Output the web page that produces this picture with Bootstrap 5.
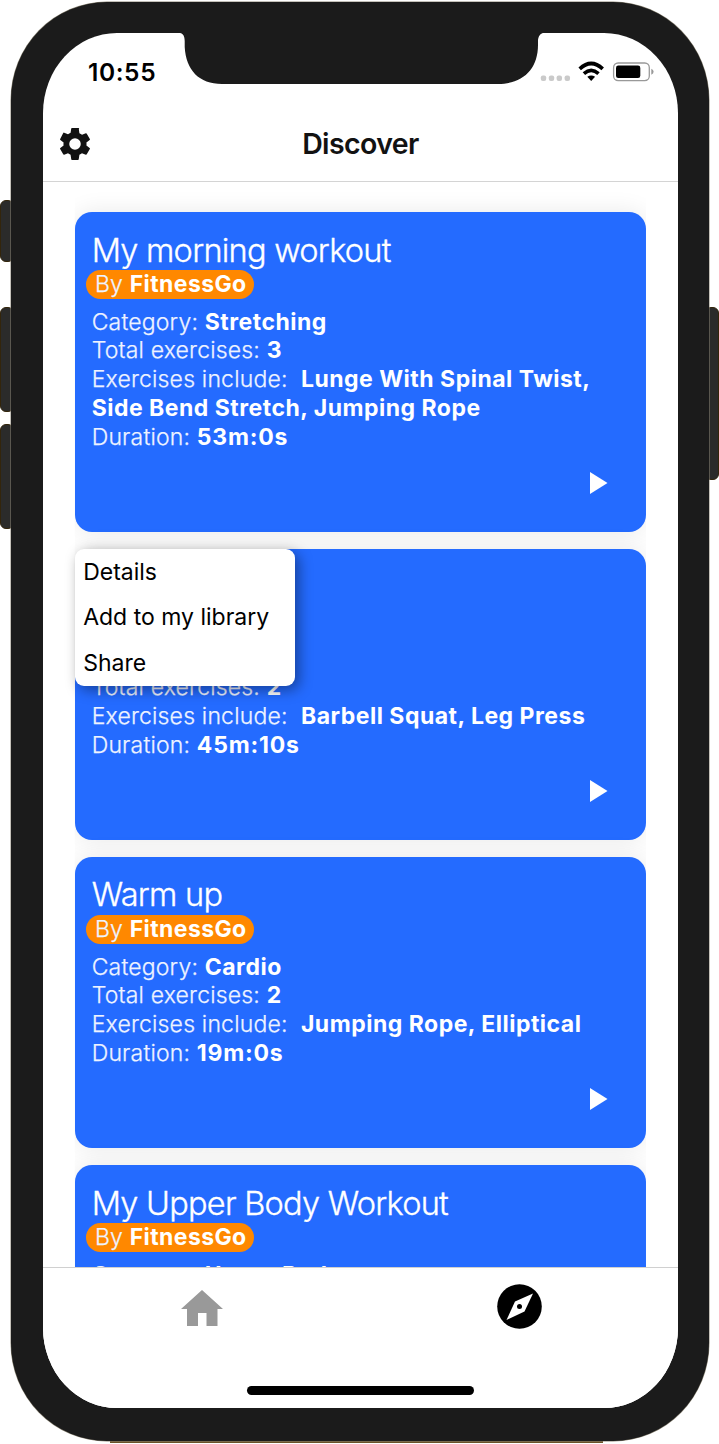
<!DOCTYPE html>
<html lang="en">
<head>
<meta charset="utf-8">
<meta name="viewport" content="width=device-width, initial-scale=1">
<title>Discover</title>
<link rel="stylesheet" href="https://cdn.jsdelivr.net/npm/bootstrap@5.3.0/dist/css/bootstrap.min.css">
<style>
html,body{height:1444px;overflow:hidden}
body{width:719px;background:#fff;font-family:Inter,sans-serif;color:#000}
.device{width:719px;height:1444px}
.frame{margin:1.5px 10px 0 10.7px;width:698.3px;height:1439.5px;padding:31.5px 31px 33px 32.3px;background:#1b1b1b;border-radius:96px/98px;box-shadow:0 0 0 .5px #8a8474}
.screen{height:1375px;border-radius:74px/80px;background:#fff;overflow:hidden}
.side-key{background:#2b2b2a;border:1px solid #33250b;width:14px}
.foot-edge{left:110px;top:1440px;width:493px;height:3px;background:#6b5228}
.notch{left:137px;top:0;width:363px;height:51px}
.status{height:77px;padding:0 24px 0 45px}
.clock{font-size:24.5px;font-weight:600;letter-spacing:.6px;line-height:79px}
.title-row{height:72px;border-bottom:1px solid #d4d4d4}
.title-row h1{font-size:28.5px;font-weight:600;letter-spacing:-.6px;color:#121212;line-height:68px}
.gear{left:16px;top:18px}
.feed{height:1085px}
.feed-list{padding:30px 0 0;margin:0 32px 0 31.7px;gap:17px;height:1085px;clip-path:inset(0)}
.workout{flex:none;border:0;border-radius:17px;background:#246bff;color:#fff;height:291.2px;padding:18.5px 17.3px 0 17px;box-shadow:0 0 24px rgba(0,0,0,.09)}
.workout.tall{height:319.8px}
.workout h2{font-size:32.5px;font-weight:300;-webkit-text-stroke:.35px #fff;line-height:40.5px;letter-spacing:-.75px;margin:0 0 -1px;white-space:nowrap}
.author{background:#ff8800;border-radius:15px;height:28.7px;line-height:29px;margin:0 0 8.9px -5.3px;width:168px;padding-left:8.6px;align-self:flex-start;font-size:23px;white-space:nowrap}
.facts{font-size:23px;line-height:28.75px;white-space:nowrap}
.facts,.author{font-weight:300;-webkit-text-stroke:.25px #eef3ff;letter-spacing:.18px;color:#eef3ff}
.facts b,.author b{font-weight:700;-webkit-text-stroke:0;letter-spacing:.5px;color:#fff}
.author b{letter-spacing:.4px}
.facts .nums{letter-spacing:.8px}
.play{left:515.5px;bottom:38px}
.options{left:31.7px;width:220px;height:137.5px;border-radius:9px;background:#fff;box-shadow:4px 4px 14px rgba(0,0,0,.4);font-size:23px;z-index:2}
.options li{height:45.8px;line-height:46.8px;padding-left:8.500px;white-space:nowrap}
.tabs{height:141px;border-top:1px solid #d0d0d0;background:#fff;z-index:3}
.home-bar{left:204px;bottom:13.5px;width:227px;height:8.5px;border-radius:5px;background:#000}
</style>
</head>
<body>
<div class="device position-relative overflow-hidden">
  <i class="side-key position-absolute rounded-2" style="left:0;top:200px;height:62px"></i>
  <i class="side-key position-absolute rounded-2" style="left:0;top:307px;height:105px"></i>
  <i class="side-key position-absolute rounded-2" style="left:0;top:424px;height:105px"></i>
  <i class="side-key position-absolute rounded-2" style="left:705px;top:307px;height:173px"></i>
  <i class="foot-edge position-absolute"></i>
  <div class="frame position-relative d-inline-block">
    <main class="screen position-relative d-flex flex-column">
      <svg class="notch position-absolute" viewBox="0 0 363 51"><path fill="#1b1b1b" d="M0 0C3 .5 4.700 3 4.700 8V14C6 37 19 51 42 51H318C343 51 358 36 358 12V8C358 3 361 .3 363 0Z"/></svg>
      <div class="status d-flex flex-shrink-0 justify-content-between">
        <span class="clock">10:55</span>
        <svg width="114" height="77" viewBox="0 0 114 77">
          <g fill="#cacaca"><rect x=".8" y="42.500" width="5.400" height="5.400" rx="2"/><rect x="8.800" y="42.500" width="5.400" height="5.400" rx="2"/><rect x="16.600" y="42.500" width="5.400" height="5.400" rx="2"/><rect x="24.600" y="42.500" width="5.400" height="5.400" rx="2"/></g>
          <g fill="none" stroke="#000" stroke-width="3.700"><path d="M39.700 35.800Q51.200 25.200 62.700 35.800"/><path d="M43.900 40.600Q51.200 34.200 58.500 40.600"/></g>
          <path d="M51.200 48l-3.900-4.200q3.900-2.800 7.800 0z"/>
          <rect x="73.600" y="30" width="35.700" height="17.600" rx="4.500" fill="#fff" stroke="#999" stroke-width="1.300"/><rect x="76" y="32.600" width="24.300" height="12.400" rx="2.300"/><path d="M111.300 35.700q2.300 1 2.300 3t-2.300 3z" fill="#999"/>
        </svg>
      </div>
      <header class="title-row position-relative flex-shrink-0 text-center">
        <svg class="gear position-absolute" width="32" height="32" viewBox="2.250 2 19.500 20"><path fill="#111" d="M19.140 12.940c.04-.3.060-.61.060-.94 0-.32-.02-.64-.07-.94l2.030-1.580a.49.49 0 0 0 .12-.61l-1.920-3.320a.49.49 0 0 0-.59-.22l-2.390.96a7 7 0 0 0-1.620-.94l-.36-2.540A.48.48 0 0 0 13.920 2h-3.840a.48.48 0 0 0-.47.410l-.36 2.540c-.59.240-1.130.57-1.620.94l-2.390-.96a.48.48 0 0 0-.59.220L2.740 8.870a.48.48 0 0 0 .12.610l2.030 1.580c-.05.3-.09.630-.09.940s.02.640.07.940l-2.030 1.580a.49.49 0 0 0-.12.610l1.920 3.320c.12.220.37.290.59.220l2.390-.96c.5.380 1.030.7 1.620.94l.36 2.540c.05.240.24.810.48.810h3.840c.24 0 .44-.57.47-.81l.36-2.540c.59-.24 1.130-.56 1.620-.94l2.390.96c.22.080.47 0 .59-.22l1.920-3.320a.48.48 0 0 0-.12-.61zM12 15.600a3.600 3.600 0 1 1 0-7.200 3.600 3.600 0 0 1 0 7.200z"/></svg>
        <h1 class="m-0">Discover</h1>
      </header>
      <section class="feed flex-shrink-0">
        <div class="feed-list d-flex flex-column">
          <article class="card workout tall"><h2>My morning workout</h2><div class="author">By <b>FitnessGo</b></div>
            <div class="facts">Category: <b>Stretching</b><br>Total exercises: <b>3</b><br>Exercises include: &nbsp;<b>Lunge With Spinal Twist,<br>Side Bend Stretch, Jumping Rope</b><br>Duration: <b class="nums">53m:0s</b></div>
            <svg class="play position-absolute" width="18" height="22"><path fill="#fff" d="M0 0L17.500 11L0 22Z"/></svg></article>
          <article class="card workout"><h2>&nbsp;</h2><div class="author"></div>
            <div class="facts"><br>Total exercises: <b>2</b><br>Exercises include: &nbsp;<b>Barbell Squat, Leg Press</b><br>Duration: <b class="nums">45m:10s</b></div>
            <svg class="play position-absolute" width="18" height="22"><path fill="#fff" d="M0 0L17.500 11L0 22Z"/></svg></article>
          <article class="card workout"><h2>Warm up</h2><div class="author">By <b>FitnessGo</b></div>
            <div class="facts">Category: <b>Cardio</b><br>Total exercises: <b>2</b><br>Exercises include: &nbsp;<b>Jumping Rope, Elliptical</b><br>Duration: <b class="nums">19m:0s</b></div>
            <svg class="play position-absolute" width="18" height="22"><path fill="#fff" d="M0 0L17.500 11L0 22Z"/></svg></article>
          <article class="card workout"><h2>My Upper Body Workout</h2><div class="author">By <b>FitnessGo</b></div>
            <div class="facts">Category: <b>Upper Body</b></div></article>
        </div>
        <ul class="options list-unstyled m-0 position-absolute" style="top:515.5px"><li>Details</li><li>Add to my library</li><li>Share</li></ul>
      </section>
      <nav class="tabs position-relative flex-shrink-0 d-flex">
        <a class="col-6 text-center pt-3" href="#"><svg width="42" height="48" viewBox="0 0 42 48"><path fill="#999" d="M21 6L42 25H36.500V42H25.500V29H17V42H6V25H0Z"/></svg></a>
        <a class="col-6 text-center pt-3" href="#"><svg width="45" height="45" viewBox="0 0 45 45"><circle cx="22.500" cy="22.500" r="22.300"/><path fill="#fff" d="M36 9.500L27.500 27.500L9.500 36L18 17.500Z"/><circle cx="22.500" cy="22.500" r="2.500"/></svg></a>
        <i class="home-bar position-absolute"></i>
      </nav>
    </main>
  </div>
</div>
<script src="https://cdn.jsdelivr.net/npm/bootstrap@5.3.0/dist/js/bootstrap.bundle.min.js"></script>
</body>
</html>
